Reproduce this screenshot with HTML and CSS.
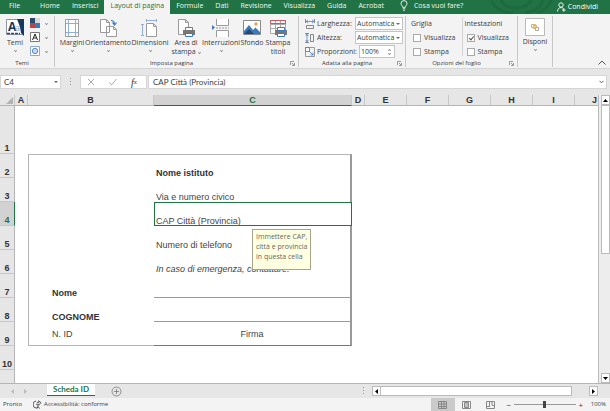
FILE: index.html
```html
<!DOCTYPE html>
<html lang="it">
<head>
<meta charset="utf-8">
<title>Scheda ID</title>
<link rel="stylesheet" href="styles.css">
</head>
<body>
<nav class="menu">
  <svg class="menu-art" width="64" height="14" viewBox="0 0 64 14" fill="none" stroke="#1d6a3e" stroke-width="3"><path d="M0 0c4 9 12 13 22 13M10 0c2 5 8 8 16 8 6 0 12-3 14-8M34 13c10-1 16-6 18-13M46 13c6-2 12-7 14-13"/></svg>
  <button class="file">File</button>
  <button>Home</button>
  <button>Inserisci</button>
  <button class="active">Layout di pagina</button>
  <button>Formule</button>
  <button>Dati</button>
  <button>Revisione</button>
  <button>Visualizza</button>
  <button>Guida</button>
  <button>Acrobat</button>
  <button class="ask"><svg width="8" height="11" viewBox="0 0 8 11" fill="none" stroke="#fff" stroke-width=".9"><path d="M2.6 7.3C2.6 5.8 1 5.3 1 3.6a3 3 0 0 1 6 0c0 1.700-1.600 2.200-1.600 3.700zM2.700 8.800h2.600M3.200 10.300h1.600"/></svg>Cosa vuoi fare?</button>
  <button class="share"><svg width="9" height="10" viewBox="0 0 9 10" fill="none" stroke="#fff" stroke-width=".9"><circle cx="4" cy="3" r="2.200"/><path d="M.6 9.500C.6 6.800 2 5.600 4 5.600c1 0 1.800.3 2.300.8M5 8h3.600M6.800 6.200V9.800"/></svg>Condividi</button>
</nav>

<section class="ribbon">
  <div class="group themes">
    <div class="tools">
      <button class="big"><svg width="20" height="20" viewBox="0 0 20 20"><path fill="#fff" stroke="#8b95a5" d="M1.500 1.500h16v15h-16z"/><path fill="#17375e" d="M12 1h7v17l-3-3-1-6z"/><text class="icon-aa" x="3" y="13">A</text><text class="icon-a" x="10" y="13">a</text><path stroke="#28496f" stroke-width="1.500" stroke-dasharray="3 1" d="M2 15.500h13"/></svg>Temi<i class="chev"></i></button>
      <div class="stack">
        <button aria-label="Colori"><svg width="10" height="10" viewBox="0 0 10 10"><path fill="#28496f" d="M0 0h5v5H0z"/><path fill="#d8d8d8" d="M5 0h5v5H5z"/><path fill="#b8434b" d="M0 5h5v5H0z"/><path fill="#3979bc" d="M5 5h5v5H5z"/></svg><i class="chev"></i></button>
        <button aria-label="Caratteri"><svg width="10" height="10" viewBox="0 0 10 10"><path fill="#fff" stroke="#777" d="M.5.5h9v9h-9z"/><path fill="none" stroke="#222" d="M2.500 8 5 2l2.500 6M3.400 6h3.200"/></svg><i class="chev"></i></button>
        <button aria-label="Effetti"><svg width="10" height="10" viewBox="0 0 10 10"><path fill="#fff" stroke="#8caad0" d="M.5.5h9v9h-9z"/><circle cx="5" cy="5" r="2.700" fill="#c8daf0" stroke="#5b8bc9"/></svg><i class="chev"></i></button>
      </div>
    </div>
    <h2>Temi</h2>
  </div>

  <div class="group setup">
    <div class="tools">
      <button class="big"><svg width="18" height="18" viewBox="0 0 18 18" fill="none"><path fill="#fff" stroke="#9a9a9a" d="M2.500.5h13v17h-13z"/><path stroke="#8fb0d4" d="M5.500 1v16M12.500 1v16M3 4.500h12M3 13.500h12"/></svg>Margini<i class="chev"></i></button>
      <button class="big"><svg width="20" height="18" viewBox="0 0 20 18"><path fill="#fff" stroke="#9a9a9a" d="M2.500.5h6l3 3v10h-9zM8.500.5v3h3M8.500 7.500h7l3 3v7h-10zM15.500 7.500v3h3"/><path fill="none" stroke="#3979bc" stroke-width="1.200" d="M13 1.500c2.500 0 3.500 1 3.500 4M14.500 3.500l2 2.500 2-2.500"/></svg>Orientamento<i class="chev"></i></button>
      <button class="big"><svg width="18" height="18" viewBox="0 0 18 18"><path fill="#fff" stroke="#9a9a9a" d="M5.500 4.500h7l3 3v10h-10zM12.500 4.500v3h3"/><path fill="none" stroke="#8fb0d4" d="M5 1.500h11M5.500 0v3M15.500 0v3M1.500 5v12M0 5.500h3M0 16.500h3"/></svg>Dimensioni<i class="chev"></i></button>
      <button class="big"><svg width="18" height="18" viewBox="0 0 18 18"><path fill="#fff" stroke="#9a9a9a" d="M1.500.5h7l3 3v12h-10zM8.500.5v3h3"/><path fill="#fff" stroke="#777" d="M8.500 8.500h7v4h-7z"/><path fill="#777" d="M6 11h12v5H6z"/><path fill="#fff" stroke="#3979bc" d="M8.500 14.500h7v3h-7z"/></svg>Area di<span>stampa <i class="chev"></i></span></button>
      <button class="big"><svg width="18" height="18" viewBox="0 0 18 18"><path fill="#fff" stroke="#9a9a9a" d="M4.500 0v6.500h12V0M4.500 18v-6.500h12V18"/><path stroke="#9a9a9a" stroke-dasharray="2 1" d="M4 9h13"/><path fill="#3979bc" d="m0 6 3 2.500L0 11z"/></svg>Interruzioni<i class="chev"></i></button>
      <button class="big"><svg width="18" height="18" viewBox="0 0 18 18"><path fill="#fff" stroke="#8a8a8a" d="M.5 1.500h17v14H.5z"/><path fill="#3979bc" d="m1 12 5-6 4 5 2.500-2.500L17 13v2H1z"/><path fill="#28496f" d="m1 15 5-5 5 5z"/><circle cx="13" cy="5" r="1.700" fill="#e4a64c"/></svg>Sfondo</button>
      <button class="big"><svg width="18" height="18" viewBox="0 0 18 18"><path fill="#fff" stroke="#aaa" d="M1.500 1.500h15v13h-15zM1 5.500h16M1 9.500h16M6.500 1v14M11.500 1v14"/><path fill="none" stroke="#c65961" d="M1.500 4.500v-3h15v3z"/><path fill="#777" d="M6 11h12v5H6z"/><path fill="#fff" stroke="#3979bc" d="M8.500 8.500h7v3h-7zM8.500 14.500h7v3h-7z"/></svg>Stampa<span>titoli</span></button>
    </div>
    <h2>Imposta pagina</h2>
    <button class="launch" aria-label="Imposta pagina"><svg width="5" height="5" viewBox="0 0 5 5" fill="none" stroke="#999"><path d="M.5 4V.5H4M2 2l2 2M4.500 2v2.500H2"/></svg></button>
  </div>

  <div class="group fit">
    <div class="fields">
      <svg width="10" height="10" viewBox="0 0 10 10" fill="none"><path stroke="#888" d="M.5 0v4M9.500 0v4M1.500 6.500h7v3h-7z"/><path stroke="#3979bc" stroke-width=".7" d="M1 2.500h8M3 .8 1.200 2.500 3 4.200M7 .8l1.800 1.700L7 4.200"/></svg>
      <label for="w">Larghezza:</label>
      <div class="pick"><select id="w"><option>Automatica</option></select><i class="tri"></i></div>
      <svg width="10" height="10" viewBox="0 0 10 10" fill="none"><path stroke="#888" d="M0 .5h4M0 9.500h4M5.500 1.500h3v7h-3z"/><path stroke="#3979bc" stroke-width=".7" d="M2 1v8M.8 3 2 1.200 3.200 3M.8 7 2 8.800 3.200 7"/></svg>
      <label for="h">Altezza:</label>
      <div class="pick"><select id="h"><option>Automatica</option></select><i class="tri"></i></div>
      <svg width="10" height="10" viewBox="0 0 10 10" fill="none"><path stroke="#999" d="M.5.5h9v9h-9z"/><path fill="#fff" stroke="#3979bc" stroke-width=".8" d="M.5.500h4v4h-4zM4 4l4 4M8 5.500V8H5.500"/></svg>
      <label for="p">Proporzioni:</label>
      <div class="pick spin"><input id="p" type="text" value="100%"><i class="chev up"></i><i class="chev down"></i></div>
    </div>
    <h2>Adatta alla pagina</h2>
    <button class="launch" aria-label="Adatta alla pagina"><svg width="5" height="5" viewBox="0 0 5 5" fill="none" stroke="#999"><path d="M.5 4V.5H4M2 2l2 2M4.500 2v2.500H2"/></svg></button>
  </div>

  <div class="group options">
    <div class="checks">
      <fieldset><legend>Griglia</legend>
        <label><input type="checkbox">Visualizza</label>
        <label><input type="checkbox">Stampa</label>
      </fieldset>
      <fieldset><legend>Intestazioni</legend>
        <label><input type="checkbox" checked>Visualizza</label>
        <label><input type="checkbox">Stampa</label>
      </fieldset>
    </div>
    <h2>Opzioni del foglio</h2>
    <button class="launch" aria-label="Opzioni del foglio"><svg width="5" height="5" viewBox="0 0 5 5" fill="none" stroke="#999"><path d="M.5 4V.5H4M2 2l2 2M4.500 2v2.500H2"/></svg></button>
  </div>

  <div class="group arrange">
    <button class="big"><svg width="20" height="18" viewBox="0 0 20 18"><path fill="#fff" stroke="#bbb" d="M.5.500h19v17H.5z"/><path fill="#fff" stroke="#d9b36a" d="M6.500 6.500h4v3h-4z"/><path fill="#f3cf86" stroke="#d9b36a" d="M8.500 7.500h3v3h-3z"/><path fill="#fff" stroke="#aaa" d="M10.500 9.500h3v3h-3z"/></svg>Disponi<i class="chev"></i></button>
  </div>
  <button class="collapse" aria-label="Comprimi"><svg width="8" height="5" viewBox="0 0 8 5" fill="none" stroke="#555"><path d="M.5 4.500 4 1l3.500 3.500"/></svg></button>
</section>

<section class="formula">
  <div class="namebox"><input type="text" value="C4" aria-label="Casella nome"><i class="tri"></i></div>
  <svg class="grip" width="2" height="8" viewBox="0 0 2 8" fill="#999"><path d="M0 0h1v1H0zM0 3h1v1H0zM0 6h1v1H0z"/></svg>
  <div class="fx">
    <button aria-label="Annulla"><svg width="8" height="8" viewBox="0 0 8 8" stroke="#aaa"><path d="m1 1 6 6M7 1 1 7"/></svg></button>
    <button aria-label="Invio"><svg width="8" height="8" viewBox="0 0 8 8" fill="none" stroke="#aaa"><path d="m.5 4.500 2 2.500 5-6"/></svg></button>
    <button class="fn">f<small>x</small></button>
  </div>
  <div class="entry"><input type="text" value="CAP Città (Provincia)" aria-label="Barra della formula"><svg width="5" height="4" viewBox="0 0 5 4" fill="none" stroke="#555"><path d="m.5.800 2 2 2-2"/></svg></div>
</section>

<main class="workspace">
  <div class="sheet">
    <table>
      <colgroup><col class="c-num"><col class="c-a"><col class="c-b"><col class="c-c"><col class="c-a"><col class="c-n"><col class="c-n"><col class="c-n"><col class="c-n"><col class="c-n"><col></colgroup>
      <thead><tr><th class="corner"><svg width="7" height="7" viewBox="0 0 7 7"><path fill="#b3b3b3" d="M7 0v7H0z"/></svg></th><th>A</th><th>B</th><th class="on">C</th><th>D</th><th>E</th><th>F</th><th>G</th><th>H</th><th>I</th><th class="last">J</th></tr></thead>
      <tbody>
        <tr class="tall"><th>1</th><td></td><td></td><td></td><td colspan="7"></td></tr>
        <tr><th>2</th><td></td><td class="l t"></td><td class="r t"><b>Nome istituto</b></td><td colspan="7"></td></tr>
        <tr><th>3</th><td></td><td class="l"></td><td class="r">Via e numero civico</td><td colspan="7"></td></tr>
        <tr><th class="on">4</th><td></td><td class="l"></td><td class="selected">CAP Città (Provincia)<div class="hint">Immettere CAP,<br>città e provincia<br>in questa cella</div></td><td colspan="7"></td></tr>
        <tr><th>5</th><td></td><td class="l"></td><td class="r">Numero di telefono</td><td colspan="7"></td></tr>
        <tr><th>6</th><td></td><td class="l"></td><td class="r"><em>In caso di emergenza, contattare:</em></td><td colspan="7"></td></tr>
        <tr><th>7</th><td></td><td class="l name"><b>Nome</b></td><td class="r line"></td><td colspan="7"></td></tr>
        <tr><th>8</th><td></td><td class="l name"><b>COGNOME</b></td><td class="r line"></td><td colspan="7"></td></tr>
        <tr><th>9</th><td></td><td class="l name end mid">N. ID</td><td class="r end-dark mid sign">Firma</td><td colspan="7"></td></tr>
        <tr><th>10</th><td></td><td></td><td></td><td colspan="7"></td></tr>
        <tr class="rest"><th></th><td></td><td></td><td></td><td colspan="7"></td></tr>
      </tbody>
    </table>
  </div>
  <div class="vscroll">
    <button aria-label="Su"><svg width="5" height="3" viewBox="0 0 5 3"><path d="M0 3 2.500 0 5 3z"/></svg></button>
    <div class="thumb"></div><div class="track"></div>
    <button aria-label="Giù"><svg width="5" height="3" viewBox="0 0 5 3"><path d="m0 0 2.500 3L5 0z"/></svg></button>
  </div>
</main>

<footer>
  <div class="tabs">
    <button class="nav" aria-label="Precedente"><svg width="3" height="5" viewBox="0 0 3 5"><path fill="#bbb" d="M3 0v5L0 2.500z"/></svg></button>
    <button class="nav" aria-label="Successivo"><svg width="3" height="5" viewBox="0 0 3 5"><path fill="#bbb" d="M0 0v5l3-2.500z"/></svg></button>
    <button class="tab">Scheda ID</button>
    <button class="add" aria-label="Nuovo foglio"><svg width="11" height="11" viewBox="0 0 11 11" fill="none" stroke="#777" stroke-width=".8"><circle cx="5.500" cy="5.500" r="4.500"/><path d="M3 5.500h5M5.500 3v5"/></svg></button>
    <svg class="grip" width="2" height="8" viewBox="0 0 2 8" fill="#999"><path d="M0 0h1v1H0zM0 3h1v1H0zM0 6h1v1H0z"/></svg>
    <div class="hscroll">
      <button aria-label="Sinistra"><svg width="3" height="5" viewBox="0 0 3 5"><path d="M3 0v5L0 2.500z"/></svg></button>
      <div class="thumb"></div><div class="track"></div>
      <button aria-label="Destra"><svg width="3" height="5" viewBox="0 0 3 5"><path d="M0 0v5l3-2.500z"/></svg></button>
    </div>
  </div>
  <div class="status">
    <span class="ready">Pronto</span>
    <span class="access"><svg width="9" height="9" viewBox="0 0 9 9" fill="none" stroke="#555"><path d="M3 1a3.500 3.500 0 0 0 1 7M5 .8a3.500 3.500 0 0 1 3 3M3 4l2 1 2-1M5 5v1.500M5 6.500l-1 2M5 6.500l1.500 2"/><circle cx="5" cy="2.500" r=".6"/></svg>Accessibilità: conforme</span>
    <button class="view current" aria-label="Normale"><svg width="9" height="8" viewBox="0 0 9 8" fill="none" stroke="#888"><path d="M.5.500h8v7h-8zM3.500 0v8M6 0v8M0 3h9M0 5.500h9"/></svg></button>
    <button class="view" aria-label="Layout di pagina"><svg width="9" height="8" viewBox="0 0 9 8" fill="none" stroke="#888"><path d="M.5.500h8v7h-8zM2.500 1.500h4v5h-4zM3 3h3M3 5h3"/></svg></button>
    <button class="view" aria-label="Anteprima interruzioni"><svg width="9" height="8" viewBox="0 0 9 8" fill="none" stroke="#888"><path d="M.5.500h8v7h-8zM3.500 1v4.500M6 1v3M1 5.500h3M6 4.500h3"/></svg></button>
    <div class="zoom"><button aria-label="Riduci">−</button><input type="range" min="0" max="200" value="100" aria-label="Zoom"><button aria-label="Ingrandisci">+</button><span class="percent">100%</span></div>
  </div>
</footer>
</body>
</html>
```
FILE: styles.css
```css
* { box-sizing: border-box; }
body {
  margin: 0;
  min-height: 100vh;
  display: flex;
  flex-direction: column;
  background: #e6e6e6;
  color: #3c3c3c;
  font: 7px/9px "Open Sans", "Noto Sans", sans-serif;
  overflow: hidden;
}
button, input, select { font: inherit; color: inherit; margin: 0; padding: 0; border: 0; background: none; border-radius: 0; }
button { display: flex; align-items: center; justify-content: center; white-space: nowrap; }
svg { display: block; flex: none; }

.menu { position: relative; display: flex; height: 14px; background: #217346; color: #f0f8f3; }
.menu button { position: relative; padding: 0 6px 3px; }
.menu .file { padding: 0 14px 3px 9px; }
.menu .active { background: #f3f3f3; color: #217346; }
.menu .ask { gap: 6px; padding-left: 10px; }
.menu .share { margin-left: auto; gap: 2px; padding: 0 12px 1px 0; color: #fff; }
.menu-art { position: absolute; left: 491px; top: 0; }

.ribbon { display: flex; height: 55px; background: #f3f3f3; border-bottom: 1px solid #d5d5d5; }
.group { position: relative; display: flex; flex-direction: column; justify-content: space-between; border-right: 1px solid #c8c8c8; margin: 2px 0 1px; padding-top: 1px; }
.group h2 { margin: 0; padding-right: 10px; font-size: 6px; font-weight: 400; line-height: 8px; text-align: center; }
.tools { display: flex; padding-top: 1px; }
.themes { width: 55px; }
.setup { width: 244px; }
.setup .tools { display: grid; grid-template-columns: 26px 46px 38px 34px 36px 26px 26px; padding-left: 4px; }
.big { flex-direction: column; justify-content: flex-start; width: 100%; height: 41px; }
.big svg { height: 20px; }
.themes .big { width: 30px; }
.big > .chev { margin-top: 2px; }
.icon-aa { font: 700 12px "Open Sans", sans-serif; fill: #17375e; }
.icon-a { font: 9px "Open Sans", sans-serif; fill: #7fa4cc; }
.stack { display: flex; flex-direction: column; gap: 4px; }
.stack button { gap: 5px; }
.chev { display: inline-block; width: 3px; height: 3px; border: solid #777; border-width: 0 1px 1px 0; transform: rotate(45deg) scale(.7); flex: none; }
.tri { position: absolute; right: 2px; top: 5px; border: 2px solid transparent; border-top-color: #666; border-bottom: 0; }
.launch { position: absolute; right: 3px; bottom: 1px; }

.fit { width: 107px; }
.fields { display: grid; grid-template-columns: 10px 36px 48px; column-gap: 2px; row-gap: 1px; align-items: center; padding-left: 6px; }
.pick { position: relative; height: 13px; background: #fff; border: 1px solid #c4c4c4; }
.pick select, .pick input { appearance: none; width: 100%; height: 11px; padding-left: 1px; line-height: 11px; display: block; }
.spin { width: 36px; margin-left: 4px; }
.chev.up, .chev.down { position: absolute; right: 3px; }
.chev.up { top: 3px; transform: rotate(225deg) scale(.7); }
.chev.down { bottom: 2px; }

.options { width: 112px; }
.checks { display: grid; grid-template-columns: 1fr 1fr; }
fieldset { margin: 0; padding: 2px 0 0 5px; border: 0; min-width: 0; display: flex; flex-direction: column; gap: 5px; }
fieldset + fieldset { border-left: 1px solid #d5d5d5; padding-left: 2px; }
legend { padding: 0; float: left; }
fieldset label { display: flex; align-items: center; gap: 3px; padding-left: 2px; }
fieldset input { appearance: none; position: relative; width: 8px; height: 8px; background: #fff; border: 1px solid #aaa; }
fieldset input:checked::after { content: ""; position: absolute; left: 2px; top: 0; width: 2px; height: 4px; border: solid #555; border-width: 0 1px 1px 0; transform: rotate(40deg); }
.arrange { width: 35px; }
.collapse { margin: auto 4px 3px auto; }

.formula { display: flex; align-items: center; height: 26px; padding: 0 3px 0 0; font: 8px/9px Lato, sans-serif; }
.namebox { position: relative; width: 61px; height: 14px; background: #fff; border: 1px solid #d5d5d5; }
.namebox input { width: 48px; height: 12px; padding-left: 3px; display: block; }
.formula .grip { margin: 0 8px 0 9px; }
.fx { display: flex; width: 67px; height: 14px; background: #fff; border: 1px solid #d5d5d5; padding-left: 6px; gap: 14px; }
.fn { font: italic 10px "Liberation Serif", serif; color: #333; }
.fn small { font-size: 7px; }
.entry { display: flex; align-items: center; flex: 1; height: 14px; margin-left: 1px; padding: 0 2px 0 4px; background: #fff; border: 1px solid #d5d5d5; }
.entry input { flex: 1; min-width: 0; height: 12px; }

.workspace { display: flex; flex: 1; }
.sheet { flex: 1; display: flex; background: #fff; font: 9px/10px "Liberation Sans", Arial, sans-serif; color: #444; }
table { width: 100%; height: 100%; border-collapse: separate; border-spacing: 0; table-layout: fixed; }
.c-num { width: 15px; } .c-a { width: 13px; } .c-b { width: 126px; } .c-c { width: 198px; } .c-n { width: 42px; }
th, td { padding: 0; vertical-align: bottom; white-space: nowrap; }
thead th { height: 11px; background: #e6e6e6; color: #333; font-weight: 700; border-right: 1px solid #c8c8c8; border-bottom: 1px solid #b5b5b5; }
thead .last { text-align: right; padding-right: 1px; border-right: 0; }
thead .on { background: #d2d2d2; color: #217346; border-bottom-color: #217346; }
.corner svg { margin: 0 0 1px 6px; }
tbody tr { height: 24px; }
tbody .tall { height: 48px; }
tbody .rest { height: auto; }
tbody th { background: #e6e6e6; color: #333; font-weight: 700; border-right: 1px solid #b5b5b5; border-bottom: 1px solid #c8c8c8; }
tbody .rest th { border-bottom: 0; }
tbody th.on { background: #d2d2d2; color: #217346; border-right-color: #217346; }
tbody td { padding: 0 2px; }
.l { border-left: 1px solid #b5b5b5; }
.t { border-top: 1px solid #b5b5b5; }
.r { border-right: 2px solid #999; }
.line { border-bottom: 1px solid #999; }
.end { border-bottom: 1px solid #b5b5b5; }
.end-dark { border-bottom: 1px solid #777; }
tbody .name { padding-left: 23px; }
tbody .mid { padding-bottom: 6px; }
.sign { text-align: center; }
.selected { position: relative; outline: 1px solid #217346; outline-offset: -1px; }
b { color: #333; }
.hint { position: absolute; z-index: 1; left: 98px; top: 27px; width: 59px; height: 41px; padding: 2px 3px; background: #ffffe1; border: 1px solid #a5a58c; font: 7px/10px "Open Sans", sans-serif; color: #666; }

.vscroll { display: flex; flex-direction: column; width: 12px; padding-left: 2px; border-left: 1px solid #bbb; background: #ededed; }
.vscroll button, .hscroll button { width: 9px; height: 10px; background: #fff; border: 1px solid #bbb; }
.thumb { background: #fff; border: 1px solid #bbb; }
.vscroll .thumb { flex: 149; }
.vscroll .track { flex: 120; }

.tabs { display: flex; align-items: center; height: 15px; border-top: 1px solid #b5b5b5; padding-right: 12px; }
.nav { width: 13px; }
.nav:first-child { margin-left: 6px; }
.tab { height: 12px; margin: 0 16px 0 15px; padding: 0 6px; background: #fff; border-bottom: 1px solid #217346; color: #217346; font: 700 8px/9px Lato, sans-serif; align-self: flex-start; }
.tabs .grip { margin: 0 7px 0 auto; }
.hscroll { display: flex; width: 226px; height: 10px; }
.hscroll .thumb { flex: 190; border-left: 0; }
.hscroll .track { flex: 17; }
.status { display: flex; align-items: center; height: 13px; background: #f3f3f3; font-size: 6px; }
.ready { margin: 0 11px 0 3px; }
.access { display: flex; gap: 2px; margin-right: auto; }
.view { width: 24px; height: 13px; }
.current { background: #cacaca; }
.zoom { display: flex; align-items: center; gap: 2px; margin: 0 4px 0 3px; }
.zoom button { width: 6px; font-size: 8px; }
.zoom input { appearance: none; width: 62px; height: 7px; background: linear-gradient(#999, #999) center / 100% 1px no-repeat; }
.zoom input::-webkit-slider-thumb { appearance: none; width: 3px; height: 7px; background: #444; }
.percent { margin-left: 5px; }
```
